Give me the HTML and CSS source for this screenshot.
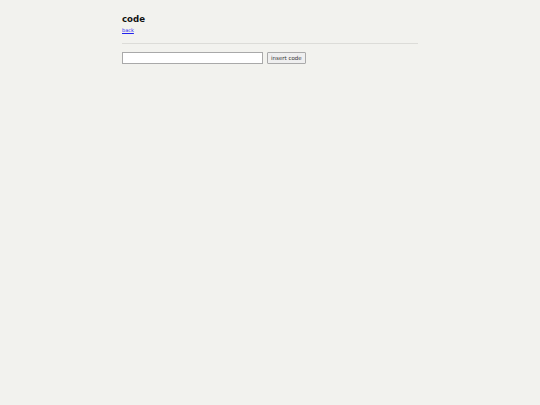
FILE: index.html
```html
<!DOCTYPE html>
<html>
<head>
<meta charset="utf-8">
<link rel="stylesheet" href="styles.css">
</head>
<body>
<div class="page">
  <h1 class="title">code</h1>
  <a class="back" href="#">back</a>
  <hr class="rule">
  <form class="form">
    <input class="field" type="text">
    <button class="btn" type="button">insert code</button>
  </form>
</div>
</body>
</html>
```

FILE: styles.css
```css
html, body {
  margin: 0;
  padding: 0;
  background: #f2f2ee;
  font-family: "DejaVu Sans", sans-serif;
}
.page {
  width: 296px;
  margin: 0 auto;
  padding-top: 13px;
}
.title {
  margin: 0;
  font-size: 8.6px;
  line-height: 12px;
  font-weight: bold;
  color: #111;
}
.back {
  display: block;
  margin-top: 2px;
  font-size: 5px;
  line-height: 6px;
  color: #2222ee;
  text-decoration: underline;
  width: max-content;
}
.rule {
  margin: 10px 0 0 0;
  border: 0;
  border-top: 1px solid #dcdcd8;
  height: 0;
}
.form {
  display: flex;
  align-items: center;
  gap: 4px;
  margin-top: 8px;
}
.field {
  box-sizing: border-box;
  width: 141px;
  height: 12px;
  margin: 0;
  padding: 0 2px;
  background: #fff;
  border: 1px solid #a9a9a9;
  font-size: 6px;
}
.btn {
  box-sizing: border-box;
  height: 12px;
  margin: 0;
  padding: 0 3px;
  background: #efefef;
  border: 1px solid #aaaaaa;
  border-radius: 1px;
  font-family: "DejaVu Sans", sans-serif;
  font-size: 5.5px;
  color: #333;
  line-height: 10px;
}
```
